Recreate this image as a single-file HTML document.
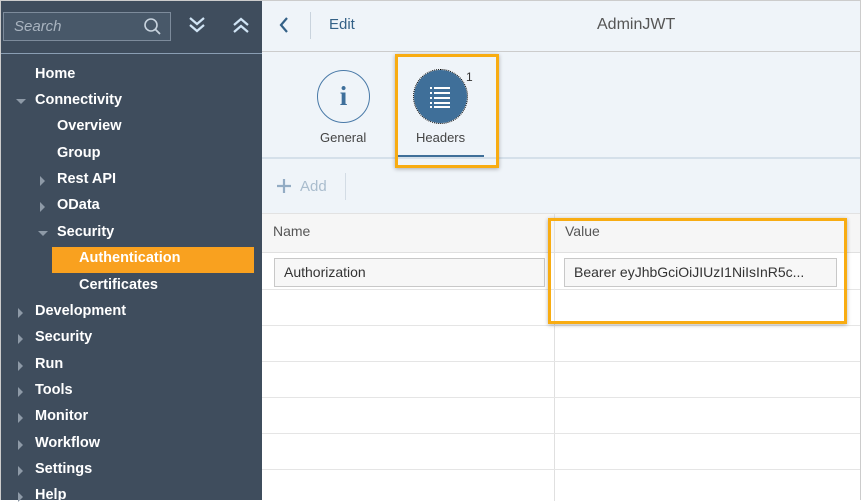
<!DOCTYPE html>
<html><head><style>
*{margin:0;padding:0;box-sizing:border-box}
body{width:861px;height:500px;overflow:hidden;font-family:"Liberation Sans",sans-serif;position:relative;background:#fff}
.side{position:absolute;left:0;top:0;width:262px;height:500px;background:#3f4d5d;border-left:1px solid #ccc;border-top:1px solid #ccc}
.search{position:absolute;left:2px;top:11px;width:168px;height:29px;border:1px solid #7d8b9b;background:#485869}
.search span{position:absolute;left:10px;top:5px;color:#a9b4c0;font-style:italic;font-size:15px}
.sline{position:absolute;left:0;top:52px;width:262px;height:1px;background:#8a9eb3}
.it{position:absolute;color:#fff;font-weight:bold;font-family:"Liberation Sans",sans-serif;font-size:14.5px}
.tr{position:absolute;width:0;height:0}
.tr.r{border-top:5px solid transparent;border-bottom:5px solid transparent;border-left:5px solid #8e9aa7}
.tr.d{border-left:5px solid transparent;border-right:5px solid transparent;border-top:5px solid #8e9aa7}
.main{position:absolute;left:262px;top:0;right:0;bottom:0;background:#eff4f9;border-right:1px solid #ccc}
.abs{position:absolute}
</style></head><body>
<div class="side">
 <div class="search"><span>Search</span>
  <svg class="abs" style="left:139px;top:4px" width="20" height="20" viewBox="0 0 20 20"><circle cx="8" cy="8" r="6" fill="none" stroke="#c8d3de" stroke-width="1.6"/><line x1="12.5" y1="12.5" x2="17" y2="17" stroke="#c8d3de" stroke-width="1.8"/></svg>
 </div>
 <svg class="abs" style="left:186px;top:14px" width="20" height="20" viewBox="0 0 20 20"><path d="M3 3l7 6 7-6M3 10l7 6 7-6" fill="none" stroke="#d0e4f5" stroke-width="2.2"/></svg>
 <svg class="abs" style="left:230px;top:14px" width="20" height="20" viewBox="0 0 20 20"><path d="M3 10l7-6 7 6M3 17l7-6 7 6" fill="none" stroke="#d0e4f5" stroke-width="2.2"/></svg>
 <div class="sline"></div>
 <div class="it" style="left:34px;top:65px">Home</div>
 <div class="tr d" style="left:15px;top:98px"></div><div class="it" style="left:34px;top:91px">Connectivity</div>
 <div class="it" style="left:56px;top:117px">Overview</div>
 <div class="it" style="left:56px;top:144px">Group</div>
 <div class="tr r" style="left:39px;top:175px"></div><div class="it" style="left:56px;top:170px">Rest API</div>
 <div class="tr r" style="left:39px;top:201px"></div><div class="it" style="left:56px;top:196px">OData</div>
 <div class="tr d" style="left:37px;top:230px"></div><div class="it" style="left:56px;top:223px">Security</div>
 <div class="abs" style="left:51px;top:246px;width:202px;height:26px;background:#f9a11f"></div>
 <div class="it" style="left:78px;top:249px">Authentication</div>
 <div class="it" style="left:78px;top:276px">Certificates</div>
 <div class="tr r" style="left:17px;top:307px"></div><div class="it" style="left:34px;top:302px">Development</div>
 <div class="tr r" style="left:17px;top:333px"></div><div class="it" style="left:34px;top:328px">Security</div>
 <div class="tr r" style="left:17px;top:360px"></div><div class="it" style="left:34px;top:355px">Run</div>
 <div class="tr r" style="left:17px;top:386px"></div><div class="it" style="left:34px;top:381px">Tools</div>
 <div class="tr r" style="left:17px;top:412px"></div><div class="it" style="left:34px;top:407px">Monitor</div>
 <div class="tr r" style="left:17px;top:439px"></div><div class="it" style="left:34px;top:434px">Workflow</div>
 <div class="tr r" style="left:17px;top:465px"></div><div class="it" style="left:34px;top:460px">Settings</div>
 <div class="tr r" style="left:17px;top:491px"></div><div class="it" style="left:34px;top:486px">Help</div>
</div>
<div class="main">
 <div class="abs" style="left:0;top:0;width:598px;height:1px;background:#ccc"></div>
 <svg class="abs" style="left:15px;top:15px" width="14" height="20" viewBox="0 0 14 20"><path d="M10 3L4 10l6 7" fill="none" stroke="#346187" stroke-width="2.2"/></svg>
 <div class="abs" style="left:48px;top:12px;width:1px;height:27px;background:#c9d3dd"></div>
 <div class="abs" style="left:67px;top:16px;font-size:15px;color:#346187">Edit</div>
 <div class="abs" style="left:335px;top:16px;font-size:16px;color:#555">AdminJWT</div>
 <div class="abs" style="left:0;top:51px;width:598px;height:1px;background:#ccc"></div>
 <div class="abs" style="left:55px;top:70px;width:53px;height:53px;border:1.5px solid #4a7aa8;border-radius:50%;text-align:center;font:bold 27px 'Liberation Serif',serif;color:#3e6f9b;line-height:50px">i</div>
 <div class="abs" style="left:58px;top:130px;font-size:13px;color:#444">General</div>
 <div class="abs" style="left:152px;top:70px;width:53px;height:53px;border-radius:50%;background:#3f6f99;outline:1px dotted #000"></div>
 <svg class="abs" style="left:166px;top:84px" width="26" height="26" viewBox="0 0 26 26" fill="#fff"><rect x="2" y="3" width="2" height="2"/><rect x="6" y="3" width="16" height="2"/><rect x="2" y="8" width="2" height="2"/><rect x="6" y="8" width="16" height="2"/><rect x="2" y="13" width="2" height="2"/><rect x="6" y="13" width="16" height="2"/><rect x="2" y="18" width="2" height="2"/><rect x="6" y="18" width="16" height="2"/><rect x="2" y="22" width="2" height="2"/><rect x="6" y="22" width="16" height="2"/></svg>
 <div class="abs" style="left:204px;top:70px;font-size:12px;color:#333">1</div>
 <div class="abs" style="left:154px;top:130px;font-size:13px;color:#444">Headers</div>
 <div class="abs" style="left:135px;top:155px;width:87px;height:3px;background:#3f6f99"></div>
 <div class="abs" style="left:0;top:157px;width:598px;height:2px;background:#d5e0ea"></div>
 <div class="abs" style="left:133px;top:54px;width:104px;height:114px;border:3px solid #f8ac12;box-shadow:0 1px 4px rgba(0,0,0,.3)"></div>
 <svg class="abs" style="left:14px;top:178px" width="16" height="16" viewBox="0 0 16 16"><path d="M8 1v14M1 8h14" stroke="#93acc4" stroke-width="2.2"/></svg>
 <div class="abs" style="left:38px;top:178px;font-size:15px;color:#a9bccd">Add</div>
 <div class="abs" style="left:83px;top:173px;width:1px;height:27px;background:#d3dce5"></div>
 <div class="abs" style="left:0;top:213px;width:598px;height:287px;background:#fff;border-top:1px solid #e2e2e2">
  <div class="abs" style="left:0;top:0;width:598px;height:39px;background:#f6f6f6;border-bottom:1px solid #e0e0e0"></div>
  <div class="abs" style="left:11px;top:9px;font-size:14px;color:#555">Name</div>
  <div class="abs" style="left:303px;top:9px;font-size:14px;color:#555">Value</div>
  <div class="abs" style="left:292px;top:0;width:1px;height:287px;background:#e0e0e0"></div>
  <div class="abs" style="left:0;top:75px;width:598px;height:1px;background:#e5e5e5"></div>
  <div class="abs" style="left:0;top:111px;width:598px;height:1px;background:#e5e5e5"></div>
  <div class="abs" style="left:0;top:147px;width:598px;height:1px;background:#e5e5e5"></div>
  <div class="abs" style="left:0;top:183px;width:598px;height:1px;background:#e5e5e5"></div>
  <div class="abs" style="left:0;top:219px;width:598px;height:1px;background:#e5e5e5"></div>
  <div class="abs" style="left:0;top:255px;width:598px;height:1px;background:#e5e5e5"></div>
  <div class="abs" style="left:12px;top:44px;width:271px;height:29px;border:1px solid #c8c8c8;background:#f7f7f7;font-size:14px;color:#333;padding:5px 9px">Authorization</div>
  <div class="abs" style="left:302px;top:44px;width:273px;height:29px;border:1px solid #c8c8c8;background:#f7f7f7;font-size:14px;color:#333;padding:5px 9px;white-space:nowrap;overflow:hidden">Bearer eyJhbGciOiJIUzI1NiIsInR5c...</div>
 </div>
 <div class="abs" style="left:286px;top:218px;width:299px;height:106px;border:3px solid #f8ac12;box-shadow:0 1px 4px rgba(0,0,0,.3)"></div>
</div>
</body></html>
